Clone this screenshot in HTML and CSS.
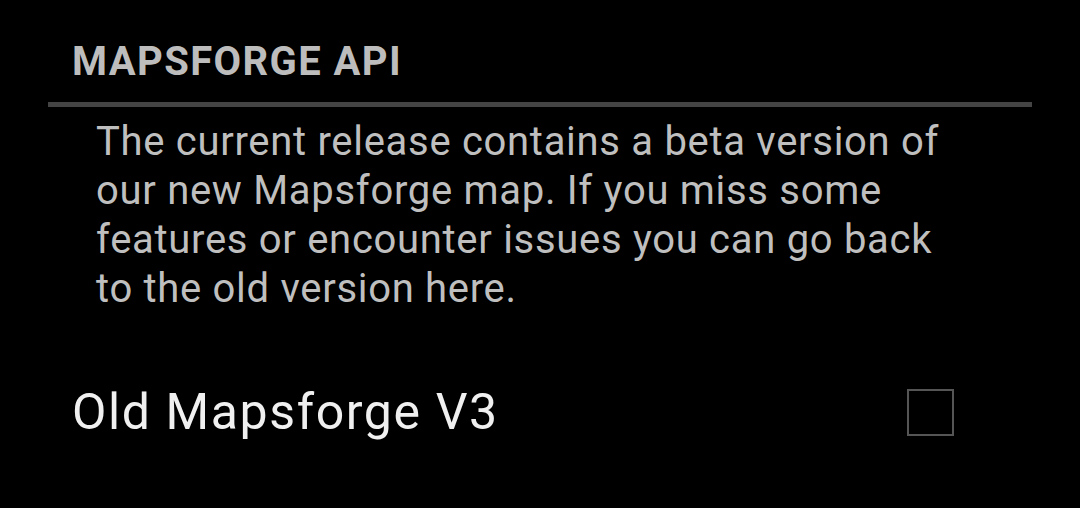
FILE: index.html
```html
<!DOCTYPE html>
<html>
<head>
<meta charset="utf-8">
<link rel="stylesheet" href="styles.css">
</head>
<body>
<div class="screen">
  <div class="category">MAPSFORGE API</div>
  <div class="divider"></div>
  <p class="summary">The current release contains a beta version of our new Mapsforge map. If you miss some features or encounter issues you can go back to the old version here.</p>
  <div class="pref-row">
    <div class="pref-title">Old Mapsforge V3</div>
    <div class="checkbox"></div>
  </div>
</div>
</body>
</html>
```
FILE: styles.css
```css
html, body {
  margin: 0;
  padding: 0;
  background: #000;
}
.screen {
  width: 1080px;
  height: 508px;
  background: #000;
  font-family: Roboto, "Noto Sans", sans-serif;
  overflow: hidden;
}
.category {
  margin: 39px 0 0 0;
  padding-left: 72px;
  font-size: 40px;
  font-weight: 700;
  letter-spacing: 1.4px;
  line-height: 46px;
  color: #bdbdbd;
}
.divider {
  margin: 17px 0 0 48px;
  width: 984px;
  height: 5px;
  background: #444;
}
.summary {
  margin: 10px 0 0 0;
  padding-left: 96px;
  width: 870px;
  font-size: 40px;
  letter-spacing: 0.7px;
  line-height: 49px;
  color: #bfbfbf;
}
.pref-row {
  margin-top: 69px;
  display: flex;
  align-items: center;
  height: 60px;
  padding-left: 72px;
}
.pref-title {
  flex: 1;
  font-size: 50px;
  letter-spacing: 1.6px;
  line-height: 60px;
  color: #f0f0f0;
}
.checkbox {
  width: 43px;
  height: 43px;
  border: 2px solid #555;
  margin-right: 126px;
}
```
